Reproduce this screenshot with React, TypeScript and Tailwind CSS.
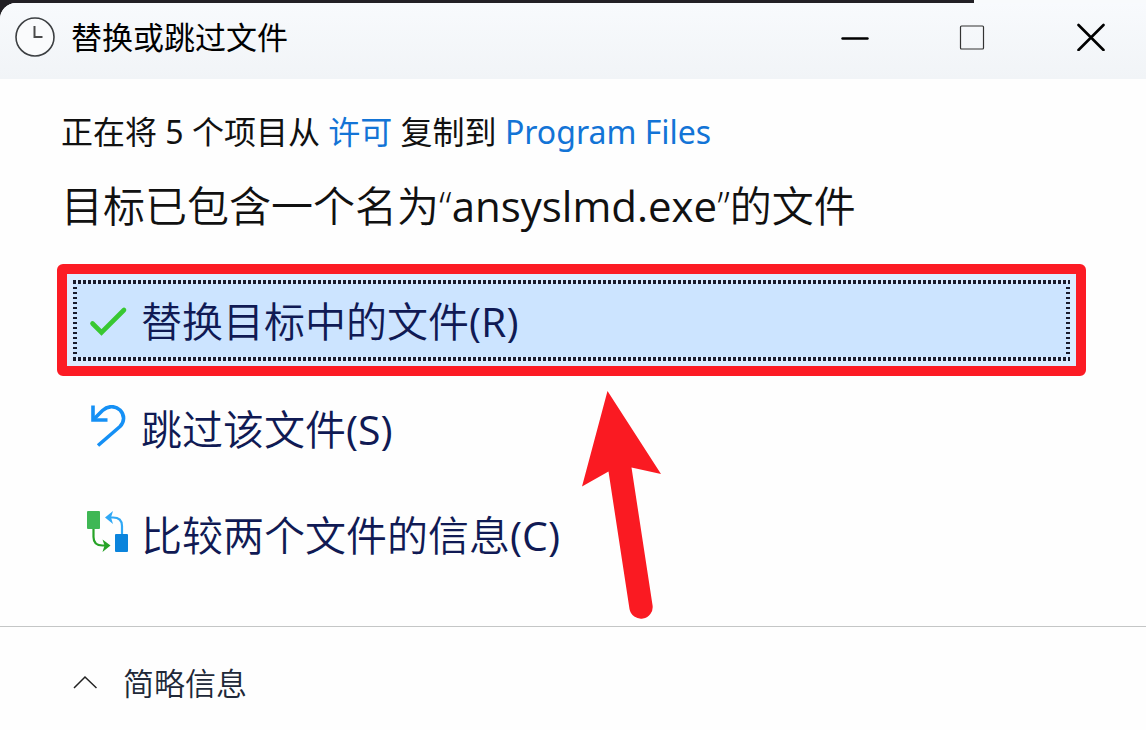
import type { ReactNode } from 'react'

function ClockIcon() {
  return (
    <svg className="h-10 w-10 shrink-0" viewBox="0 0 40 40" fill="none" aria-hidden="true">
      <circle cx="20" cy="20" r="19" fill="#fafbfc" stroke="#3c3f42" strokeWidth="1.6" />
      <path d="M19.5 9v11h8" stroke="#4a4a4a" strokeWidth="2" />
    </svg>
  )
}

function CheckIcon() {
  return (
    <svg className="h-10 w-10 shrink-0" viewBox="0 0 40 40" fill="none" aria-hidden="true">
      <path d="M3.500 22.500l9 9L35 9" stroke="#38c831" strokeWidth="4.600" strokeLinecap="round" strokeLinejoin="miter" />
    </svg>
  )
}

function UndoIcon() {
  return (
    <svg className="h-12 w-[42px] shrink-0" viewBox="0 0 42 48" fill="none" stroke="#1590f5" strokeWidth="3.600" aria-hidden="true">
      <path d="M6 0.500v14.500h14.500" />
      <path d="M6.500 14.500L15.500 5.500C21 0.500 28 0.500 33 5C38 10 37.500 17 33 21.500L11 40.500" />
    </svg>
  )
}

function CompareIcon() {
  return (
    <svg className="h-12 w-[42px] shrink-0" viewBox="0 0 42 48" fill="none" aria-hidden="true">
      <rect x="0" y="0" width="13" height="18" rx="1" fill="#3fb755" />
      <rect x="28" y="23" width="13" height="18" rx="1" fill="#0b84dc" />
      <path d="M6.500 18v8q0 8.500 9 8.500h6" stroke="#27a327" strokeWidth="2.200" />
      <path d="M15.500 28.500l8 6-8 6.500 2-6.500z" fill="#27a327" />
      <path d="M35 23v-8q0-8.500-9-8.500h-6" stroke="#30a8f5" strokeWidth="2.200" />
      <path d="M26 0L18 6.500l8 6.500-2-6.500z" fill="#30a8f5" />
    </svg>
  )
}

function OptionLabel({ text, accessKey }: { text: string; accessKey: string }) {
  return (
    <span className="text-[41px] leading-[48px] whitespace-nowrap">
      {text}
      <span className="font-normal">({accessKey})</span>
    </span>
  )
}

function Option({ icon, children }: { icon: ReactNode; children: ReactNode }) {
  return (
    <button type="button" className="flex h-[82px] items-center gap-3 pl-[30px] text-left text-[#101a54]">
      {icon}
      {children}
    </button>
  )
}

const STRIP_X = 'h-1 bg-[repeating-linear-gradient(90deg,#191b2b_0px,#191b2b_3px,transparent_3px,transparent_5px)]'
const STRIP_Y = 'w-1 shrink-0 bg-[repeating-linear-gradient(180deg,transparent_0px,transparent_3px,#191b2b_3px,#191b2b_5px)]'

// Default choice: dotted focus ring inside a red highlight frame
function FocusedOption() {
  return (
    <button type="button" className="block w-full rounded-md border-10 border-[#fc1b24] bg-[#dcebff] px-1.5 pt-1.5 pb-[5px] text-left text-[#101a54]">
      <span className={`block ${STRIP_X}`} />
      <span className="flex h-[73px] bg-[#cce4ff]">
        <span className={STRIP_Y} />
        <span className="flex flex-1 items-center gap-3 pl-3">
          <CheckIcon />
          <OptionLabel text="替换目标中的文件" accessKey="R" />
        </span>
        <span className={STRIP_Y} />
      </span>
      <span className={`block ${STRIP_X}`} />
    </button>
  )
}

function PointerArrow() {
  return (
    <svg className="pointer-events-none absolute top-[127px] left-[525px] h-[228px] w-20" viewBox="0 0 80 228" aria-hidden="true">
      <path d="M25.500 0L79 83L49.500 76.500L70.500 214A11.500 11.500 0 0 1 47.500 218L26.500 80.500L0 95.500Z" fill="#fa1a22" />
    </svg>
  )
}

export default function App() {
  return (
    <div className="min-h-screen bg-[#222025] font-['Open_Sans','Noto_Sans_CJK_SC',sans-serif] font-[350]">
      <div className="h-[3px] bg-[linear-gradient(90deg,#222025_85%,#f8fafc_85%)]" />
      <div className="flex min-h-[calc(100vh-3px)] flex-col overflow-hidden rounded-tl-2xl bg-[#fefefe]">
        {/* Title bar */}
        <header className="flex h-[76px] items-center justify-between bg-[linear-gradient(180deg,#f8fafd,#f1f4f7)] pb-2 pl-[15px]">
          <div className="flex items-center gap-4">
            <ClockIcon />
            <h1 className="text-[31px] leading-10 font-normal whitespace-nowrap text-black">替换或跳过文件</h1>
          </div>
          <div className="flex gap-2 text-black">
            <button type="button" aria-label="最小化" className="flex h-14 w-[110px] items-center justify-center">
              <svg className="h-7 w-7" viewBox="0 0 28 28" aria-hidden="true">
                <path d="M1.500 15.500h25" stroke="currentColor" strokeWidth="2.400" strokeLinecap="round" />
              </svg>
            </button>
            <button type="button" aria-label="最大化" className="flex h-14 w-[110px] items-center justify-center">
              <svg className="h-7 w-7" viewBox="0 0 28 28" fill="none" aria-hidden="true">
                <rect x="1.500" y="3" width="23" height="23" rx="1" stroke="#333" strokeWidth="1.200" />
              </svg>
            </button>
            <button type="button" aria-label="关闭" className="flex h-14 w-[110px] items-center justify-center">
              <svg className="h-7 w-7" viewBox="0 0 28 28" aria-hidden="true">
                <path d="M1.500 2l25 25M26.500 2L1.500 27" stroke="currentColor" strokeWidth="2.600" strokeLinecap="round" />
              </svg>
            </button>
          </div>
        </header>

        <main className="flex-1 pr-[60px] pl-[57px]">
          <p className="mt-[33px] pl-1 font-['Noto_Sans','Noto_Sans_CJK_SC',sans-serif] text-[32px] leading-10 font-normal whitespace-nowrap text-[#111]">
            正在将 5 个项目从 <a href="#source" className="text-[#1374d6]">许可</a> 复制到{' '}
            <a href="#destination" className="text-[#1374d6]">Program Files</a>
          </p>
          <h2 className="mt-[30px] pl-1 text-[42px] leading-[48px] whitespace-nowrap text-[#111]">
            目标已包含一个名为“<span className="font-normal">ansyslmd.exe</span>”的文件
          </h2>
          <div className="relative mt-[34px] flex flex-col">
            <FocusedOption />
            <div className="mt-3 mb-12 flex flex-col gap-6">
              <Option icon={<UndoIcon />}>
                <OptionLabel text="跳过该文件" accessKey="S" />
              </Option>
              <Option icon={<CompareIcon />}>
                <OptionLabel text="比较两个文件的信息" accessKey="C" />
              </Option>
            </div>
            <PointerArrow />
          </div>
        </main>

        {/* Details toggle */}
        <footer className="h-[104px] border-t border-[#c4c6c6] pt-9 pl-[73px]">
          <button type="button" className="flex items-center gap-[26px] text-[31px] leading-10 text-[#202838]">
            <svg className="h-6 w-6" viewBox="0 0 24 24" fill="none" aria-hidden="true">
              <path d="M1 17L12 6l11.500 11" stroke="#222" strokeWidth="1.500" />
            </svg>
            <span className="whitespace-nowrap">简略信息</span>
          </button>
        </footer>
      </div>
    </div>
  )
}
